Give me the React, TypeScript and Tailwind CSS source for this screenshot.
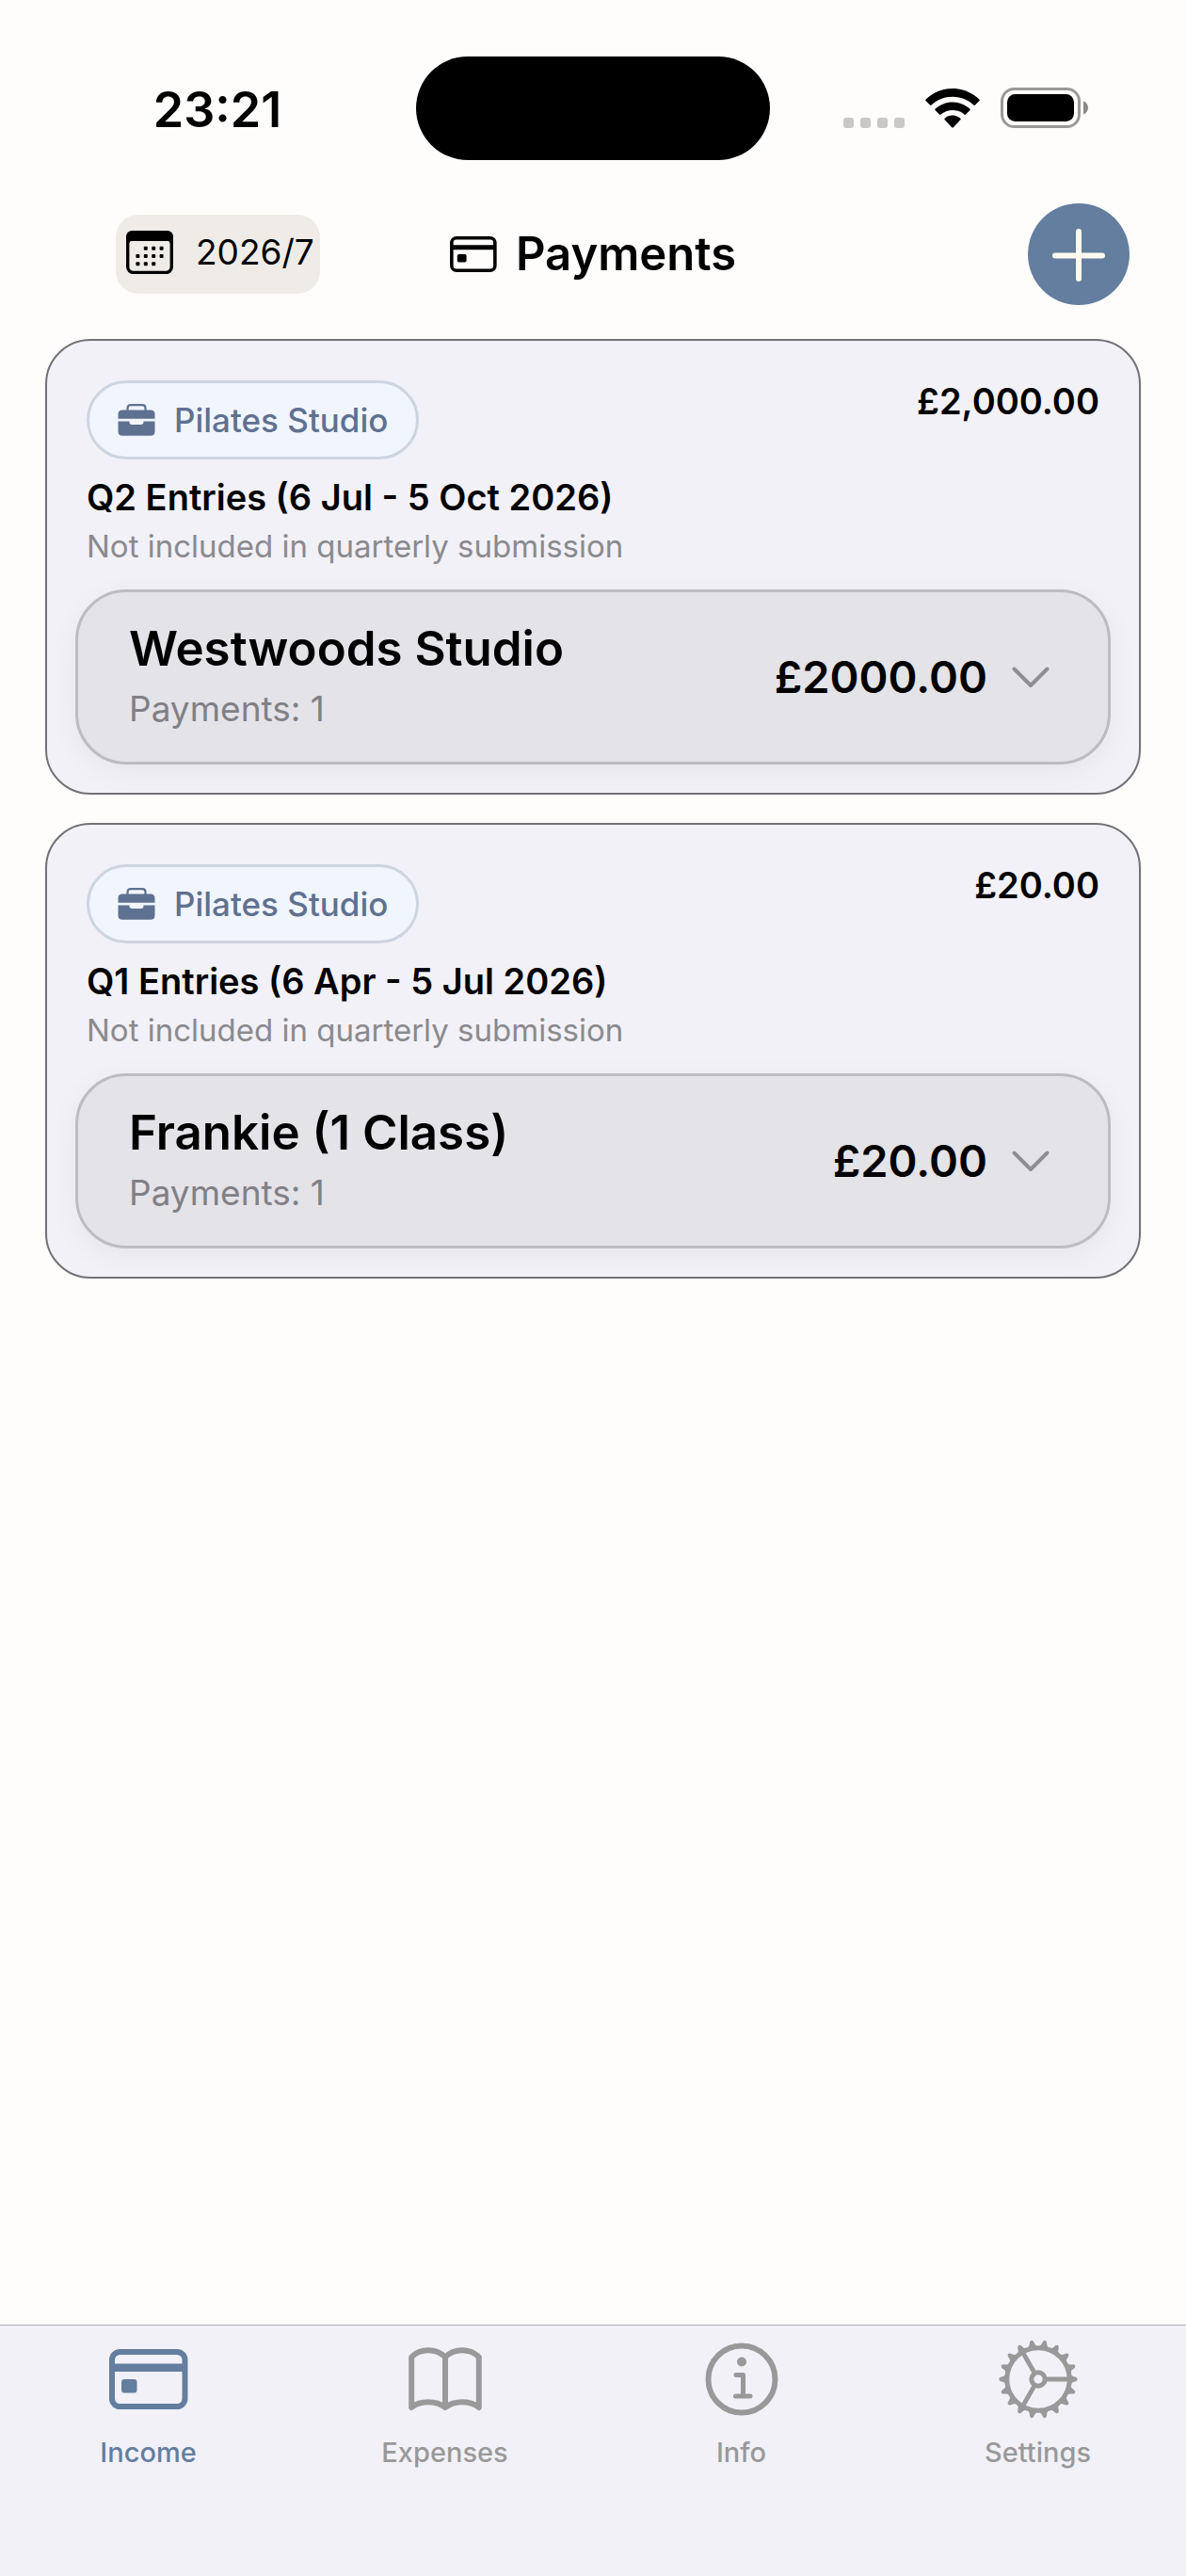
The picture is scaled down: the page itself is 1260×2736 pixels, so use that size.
import type { ReactNode } from 'react'

type Entry = {
  business: string
  total: string
  period: string
  note: string
  client: string
  count: number
  amount: string
}

const ENTRIES: Entry[] = [
  {
    business: 'Pilates Studio',
    total: '£2,000.00',
    period: 'Q2 Entries (6 Jul - 5 Oct 2026)',
    note: 'Not included in quarterly submission',
    client: 'Westwoods Studio',
    count: 1,
    amount: '£2000.00',
  },
  {
    business: 'Pilates Studio',
    total: '£20.00',
    period: 'Q1 Entries (6 Apr - 5 Jul 2026)',
    note: 'Not included in quarterly submission',
    client: 'Frankie (1 Class)',
    count: 1,
    amount: '£20.00',
  },
]

const TEETH = Array.from({ length: 18 }, (_, i) => i * 20)

function WifiIcon() {
  return (
    <svg width="58" height="42" viewBox="0 0 58 42" fill="currentColor" aria-hidden="true">
      <path d="M29 0C40 0 50 4.300 57.300 11.600C57.800 12.100 57.800 12.800 57.300 13.300L53 17.600C52.500 18.100 51.900 18 51.400 17.600C45.400 12 37.600 8.800 29 8.800S12.600 12 6.600 17.600C6.100 18 5.500 18.100 5 17.600L.7 13.300C.2 12.800.2 12.100.7 11.600C8 4.300 18 0 29 0Z" />
      <path d="M29 14.400C36 14.400 42.500 17.100 47.300 21.600C47.800 22.100 47.800 22.700 47.300 23.200L43 27.500C42.500 28 41.900 28 41.400 27.600C38.100 24.700 33.800 22.900 29 22.900S19.900 24.700 16.600 27.600C16.100 28 15.500 28 15 27.500L10.700 23.200C10.200 22.700 10.200 22.100 10.700 21.600C15.500 17.100 22 14.400 29 14.400Z" />
      <path d="M29 28.600C32.200 28.600 35.100 29.800 37.300 31.700C37.800 32.100 37.800 32.800 37.300 33.300L29.900 41.200C29.400 41.700 28.600 41.700 28.100 41.200L20.700 33.300C20.200 32.800 20.200 32.100 20.700 31.700C22.900 29.800 25.800 28.600 29 28.600Z" />
    </svg>
  )
}

function BatteryIcon() {
  return (
    <svg width="94" height="44" viewBox="0 0 94 44" aria-hidden="true">
      <rect x="1.500" y="1.500" width="82" height="40" rx="13" fill="none" stroke="#9a9998" strokeWidth="3" />
      <rect x="7" y="7" width="71" height="29" rx="8.500" fill="#000" />
      <path d="M88 14.500C91 15.500 93 18.200 93 21.500S91 27.500 88 28.500Z" fill="#8a8988" />
    </svg>
  )
}

function CalendarIcon() {
  return (
    <svg width="50" height="46" viewBox="0 0 50 46" aria-hidden="true">
      <rect x="1.700" y="1.700" width="46.600" height="42.800" rx="6" fill="none" stroke="#000" strokeWidth="3.400" />
      <path d="M0 13V7Q0 0 7 0H43Q50 0 50 7V13H46.500Q46.500 11 44 11H6Q3.500 11 3.500 13Z" />
      <g>
        <rect x="18.800" y="16.800" width="4" height="4" rx="1" />
        <rect x="27.200" y="16.800" width="4" height="4" rx="1" />
        <rect x="35.600" y="16.800" width="4" height="4" rx="1" />
        <rect x="10.400" y="25" width="4" height="4" rx="1" />
        <rect x="18.800" y="25" width="4" height="4" rx="1" />
        <rect x="27.200" y="25" width="4" height="4" rx="1" />
        <rect x="35.600" y="25" width="4" height="4" rx="1" />
        <rect x="10.400" y="33.200" width="4" height="4" rx="1" />
        <rect x="18.800" y="33.200" width="4" height="4" rx="1" />
        <rect x="27.200" y="33.200" width="4" height="4" rx="1" />
      </g>
    </svg>
  )
}

function CardIcon({ className }: { className: string }) {
  return (
    <svg className={className} viewBox="0 0 84 64" aria-hidden="true">
      <rect x="3" y="3" width="77.500" height="58" rx="8.500" fill="none" stroke="currentColor" strokeWidth="6" />
      <path d="M3 15.500H80.500V24H3Z" fill="currentColor" />
      <rect x="13" y="32" width="16.500" height="14.500" rx="3" fill="currentColor" />
    </svg>
  )
}

function BriefcaseIcon() {
  return (
    <svg width="40" height="34" viewBox="0 0 40 34" fill="currentColor" aria-hidden="true">
      <path d="M10.500 7V4.500Q10.500 1.200 13.800 1.200H26.200Q29.500 1.200 29.500 4.500V7" fill="none" stroke="currentColor" strokeWidth="2.200" />
      <path d="M5 6.500H35Q39.500 6.500 39.500 11V15.800H.5V11Q.5 6.500 5 6.500Z" />
      <path d="M.5 18.500H12.500V19.300Q12.500 22 15.200 22H24.800Q27.500 22 27.500 19.300V18.500H39.500V29.300Q39.500 33.800 35 33.800H5Q.5 33.800.5 29.300Z" />
    </svg>
  )
}

function ChevronIcon() {
  return (
    <svg width="44" height="24" viewBox="0 0 44 24" fill="none" stroke="#8e8e93" strokeWidth="4" strokeLinecap="round" strokeLinejoin="round" aria-hidden="true">
      <path d="M4.500 3.500L22 21L39.500 3.500" />
    </svg>
  )
}

function BookIcon() {
  return (
    <svg width="78" height="68" viewBox="0 0 78 68" fill="none" stroke="currentColor" strokeWidth="6" strokeLinecap="round" strokeLinejoin="round" aria-hidden="true">
      <path d="M39 10.500C34.500 6 28 3.200 21 3.200S7.500 6 3.200 10.500V64C8 60 14.500 58.200 21 58.200S34 60 39 64C44 60 50.500 58.200 57 58.200S70 60 74.800 64V10.500C70.500 6 64 3.200 57 3.200S43.500 6 39 10.500ZM39 10.500V64" />
    </svg>
  )
}

function InfoIcon() {
  return (
    <svg width="78" height="78" viewBox="0 0 78 78" fill="none" stroke="currentColor" strokeLinecap="round" aria-hidden="true">
      <circle cx="39" cy="39" r="35.500" strokeWidth="6" />
      <circle cx="39" cy="20.500" r="5" fill="currentColor" stroke="none" />
      <path d="M33 34.500H40.500V57M32.500 57H48" strokeWidth="5" strokeLinejoin="round" />
    </svg>
  )
}

function GearIcon() {
  return (
    <svg width="86" height="86" viewBox="-43 -43 86 86" fill="none" stroke="currentColor" aria-hidden="true">
      <circle r="33.200" strokeWidth="5" />
      <circle r="7.200" strokeWidth="5" />
      <path d="M9 0H32M-4.500 -7.800L-16 -27.700M-4.500 7.800L-16 27.700" strokeWidth="4.800" />
      {TEETH.map((deg) => (
        <path
          key={deg}
          d="M34.500 -5Q36 -3 40.500 -1.900Q43 0 40.500 1.900Q36 3 34.500 5Z"
          fill="currentColor"
          stroke="none"
          transform={`rotate(${deg})`}
        />
      ))}
    </svg>
  )
}

function StatusBar() {
  return (
    <div className="grid grid-cols-[1fr_376px_1fr] items-center pt-[60px]">
      <div className="pt-1 pl-5 text-center text-[52px] leading-[60px] font-semibold">23:21</div>
      <div className="h-[110px] rounded-full bg-black" />
      <div className="flex items-end justify-center pr-[26px]">
        <div className="flex gap-[7px] pb-px">
          <span className="size-[11px] rounded-[3px] bg-[#c9c8c7]" />
          <span className="size-[11px] rounded-[3px] bg-[#c9c8c7]" />
          <span className="size-[11px] rounded-[3px] bg-[#c9c8c7]" />
          <span className="size-[11px] rounded-[3px] bg-[#c9c8c7]" />
        </div>
        <div className="ml-[22px] pb-px">
          <WifiIcon />
        </div>
        <div className="ml-[22px]">
          <BatteryIcon />
        </div>
      </div>
    </div>
  )
}

function Header() {
  return (
    <header className="mt-[46px] grid grid-cols-[1fr_auto_1fr] items-center">
      <div className="pl-[123px]">
        <button className="flex h-[84px] w-[217px] items-center gap-6 rounded-[24px] bg-[#efece8] pb-1 pl-[11px] text-[37px] leading-[44px] whitespace-nowrap">
          <CalendarIcon />
          2026/7
        </button>
      </div>
      <h1 className="flex items-center gap-5 text-[49px] leading-[60px] font-semibold">
        <CardIcon className="h-[38px] w-[50px]" />
        Payments
      </h1>
      <div className="flex justify-end pr-[60px]">
        <button aria-label="Add payment" className="flex size-[108px] items-center justify-center rounded-full bg-[#637e9f]">
          <svg width="58" height="58" viewBox="0 0 58 58" stroke="#fffaf0" strokeWidth="6" strokeLinecap="round" aria-hidden="true">
            <path d="M29 5V55M4 30.500H54" />
          </svg>
        </button>
      </div>
    </header>
  )
}

function EntryCard({ entry }: { entry: Entry }) {
  return (
    <section className="rounded-[48px] border-2 border-[#727177] bg-[#f2f1f7] px-[30px] pt-[42px] pb-[30px]">
      <div className="flex items-start justify-between px-3">
        <div>
          <span className="inline-flex h-[84px] items-center gap-5 rounded-full border-3 border-[#cdd5e1] bg-[#f1f5fd] px-[30px] text-[35px] leading-[44px] font-medium text-[#5f7190]">
            <BriefcaseIcon />
            {entry.business}
          </span>
          <h2 className="mt-[14px] text-[38px] leading-[52px] font-semibold">{entry.period}</h2>
          <p className="text-[33px] leading-[52px] text-[#8a8a8e]">{entry.note}</p>
        </div>
        <span className="text-[38px] leading-[44px] font-semibold">{entry.total}</span>
      </div>
      <button className="mt-5 flex w-full items-center rounded-[54px] border-3 border-[#bdbcc1] bg-[#e4e3e8] py-[30px] pr-[60px] pl-[54px] text-left shadow-[0_8px_30px_rgba(0,0,0,0.05)]">
        <span className="flex flex-1 flex-col gap-2">
          <span className="text-[51px] leading-[60px] font-semibold">{entry.client}</span>
          <span className="text-[37px] leading-[52px] text-[#808085]">Payments: {entry.count}</span>
        </span>
        <span className="mr-6 text-[47px] leading-[60px] font-semibold">{entry.amount}</span>
        <ChevronIcon />
      </button>
    </section>
  )
}

function Tab({ label, icon, active = false }: { label: string; icon: ReactNode; active?: boolean }) {
  return (
    <a
      href="#"
      aria-current={active ? 'page' : undefined}
      className={active ? 'flex flex-col items-center gap-[10px] text-[#637e9f]' : 'flex flex-col items-center gap-[10px] text-[#999999]'}
    >
      <span className="flex h-24 items-center">{icon}</span>
      <span className="text-[29px] leading-[40px] font-medium">{label}</span>
    </a>
  )
}

export default function App() {
  return (
    <div className="flex min-h-screen flex-col bg-[#fefdfb] font-['Inter',sans-serif] text-black">
      <StatusBar />
      <Header />
      <main className="mt-9 flex flex-1 flex-col gap-[30px] px-12">
        {ENTRIES.map((entry) => (
          <EntryCard key={entry.period} entry={entry} />
        ))}
      </main>
      <nav className="grid grid-cols-4 border-t border-[#aeacb3] bg-[#f2f1f7] pt-[9px] pb-[111px]">
        <Tab label="Income" icon={<CardIcon className="h-16 w-[84px]" />} active />
        <Tab label="Expenses" icon={<BookIcon />} />
        <Tab label="Info" icon={<InfoIcon />} />
        <Tab label="Settings" icon={<GearIcon />} />
      </nav>
    </div>
  )
}
